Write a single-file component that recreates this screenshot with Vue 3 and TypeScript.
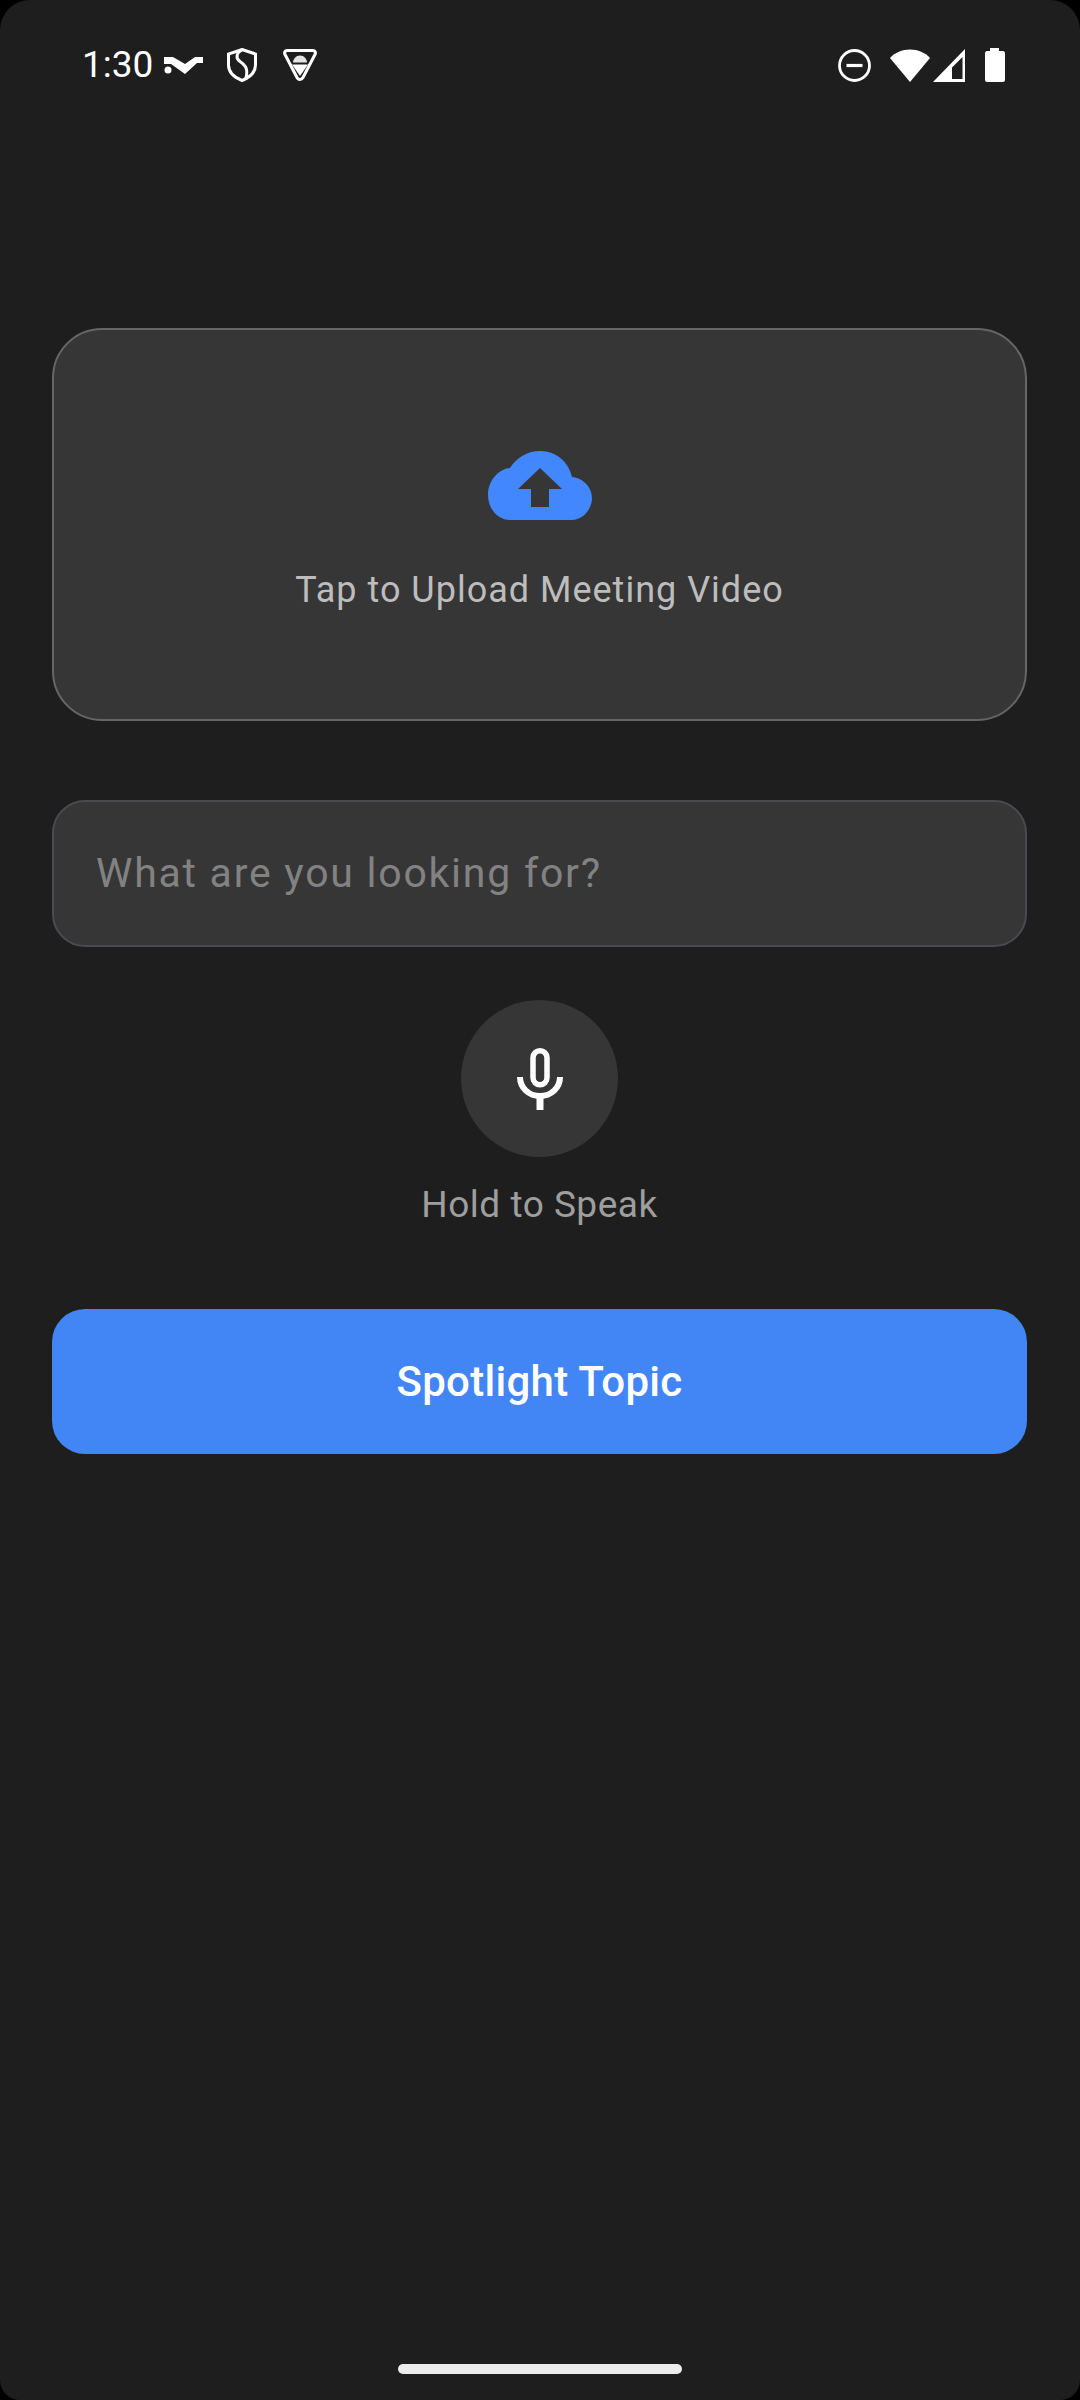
<script setup lang="ts">
const title = 'Spotlight Topic'
</script>

<template>
  <div class="screen">
    <header class="status">
      <div class="status-left">
        <span class="clock">1:30</span>
        <svg width="39" height="17" viewBox="0 0 39 17">
          <circle cx="4" cy="13" r="3.500" fill="#fff" />
          <path d="M0 0h9l12 7L31 0h8v6h-6L21 17 7 7H0z" fill="#fff" />
        </svg>
        <svg class="ic-shield" width="30" height="34" viewBox="0 0 30 34" fill="none" stroke="#fff" stroke-width="3">
          <path d="M15 1.500 28.500 6v11c0 7.500-6 12.500-13.500 15.500C7.500 29.500 1.500 24.500 1.500 17V6z" />
          <path d="M15 2c-6 3-6.500 8.500-2 11.500s8.500 6 6 17" />
        </svg>
        <svg class="ic-android" width="34" height="32" viewBox="0 0 34 32">
          <path d="M4 1.500h26c2 0 3 2 2 4L20 28.500c-1.500 2.500-5 2.500-6 0L2 5.500c-1-2 0-4 2-4z" fill="none" stroke="#fff" stroke-width="3" />
          <path d="M10 13.500c0-3.500 3-7 7-7s7 3.500 7 7z" fill="#e4e4e4" />
          <path d="M9 15.500h16L17 27z" fill="#fff" />
        </svg>
      </div>
      <div class="status-right">
        <svg width="33" height="33" viewBox="0 0 33 33" fill="none" stroke="#fff">
          <circle cx="16.500" cy="16.500" r="15" stroke-width="2.800" />
          <path d="M8.500 16.500h16" stroke-width="3.200" />
        </svg>
        <svg class="ic-wifi" width="40" height="33" viewBox="0 0 40 33">
          <path d="M0 9C5 3.500 12 .5 20 .5S35 3.500 40 9L20 33z" fill="#fff" />
        </svg>
        <svg class="ic-signal" width="33" height="33" viewBox="0 0 33 33">
          <path fill-rule="evenodd" d="M32 0v33H0zM29.500 8 19 18.500V30h10.500z" fill="#fff" />
        </svg>
        <svg class="ic-battery" width="20" height="34" viewBox="0 0 20 34">
          <path d="M5 0h9v3h4c1 0 2 1 2 2v27c0 1-1 2-2 2H2c-1 0-2-1-2-2V5c0-1 1-2 2-2h3z" fill="#fff" />
        </svg>
      </div>
    </header>

    <main class="content">
      <section class="upload">
        <svg width="104" height="69" viewBox="0 0 104 69">
          <path d="M22 69C10 69 0 58 0 44c0-14 10-26 22-27C29 6 40 0 52 0c17 0 29 12 32 26 11 1 20 10 20 21 0 12-10 22-20 22z" fill="#4287fe" />
          <path d="M52 17 74 38H61v18H43V38H30z" fill="#363636" />
        </svg>
        <span class="upload-label">Tap to Upload Meeting Video</span>
      </section>

      <div class="query">What are you looking for?</div>

      <div class="voice">
        <div class="mic">
          <svg width="46" height="62" viewBox="0 0 46 62">
            <rect x="16" y="2.750" width="14" height="34" rx="7" fill="none" stroke="#fff" stroke-width="5.500" />
            <path d="M3 29c0 11 9 19 20 19s20-8 20-19" fill="none" stroke="#fff" stroke-width="6" />
            <path d="M23 47v15" stroke="#fff" stroke-width="7" />
          </svg>
        </div>
        <span class="voice-label">Hold to Speak</span>
      </div>

      <button type="button" class="spot">{{ title }}</button>
    </main>

    <div class="home"></div>
  </div>
</template>

<style>
html,
body {
  margin: 0;
  background: #000;
}
</style>

<style scoped>
.screen {
  position: relative;
  width: 1080px;
  height: 2400px;
  background: #1e1e1e;
  border-radius: 30px 30px 20px 20px;
  display: flex;
  flex-direction: column;
  font-family: Roboto, sans-serif;
  overflow: hidden;
}

.status {
  height: 126px;
  padding: 48px 75px 0 82px;
  box-sizing: border-box;
  display: flex;
  justify-content: space-between;
  align-items: flex-start;
  flex-shrink: 0;
}

.status-left {
  display: flex;
  align-items: center;
  height: 34px;
}

.clock {
  color: #fff;
  font-size: 37px;
  line-height: 34px;
  margin-right: 11px;
}

.ic-shield {
  margin-left: 24px;
}

.ic-android {
  margin-left: 26px;
}

.status-right {
  display: flex;
  align-items: center;
  height: 34px;
}

.ic-wifi {
  margin-left: 19px;
}

.ic-signal {
  margin-left: 3px;
}

.ic-battery {
  margin-left: 19px;
}

.content {
  padding: 202px 53px 0 52px;
  display: flex;
  flex-direction: column;
}

.upload {
  height: 393px;
  box-sizing: border-box;
  background: #363636;
  border: 2px solid #666;
  border-radius: 50px;
  display: flex;
  flex-direction: column;
  align-items: center;
  padding-top: 121px;
}

.upload-label {
  margin-top: 48px;
  color: #bdbdbd;
  font-size: 36px;
  line-height: 44px;
  letter-spacing: 1px;
}

.query {
  margin-top: 79px;
  height: 147px;
  box-sizing: border-box;
  background: #363636;
  border: 2px solid #4a4a52;
  border-radius: 33px;
  padding: 0 0 2px 42px;
  display: flex;
  align-items: center;
  color: #828282;
  font-size: 41px;
  letter-spacing: 1.750px;
}

.voice {
  margin-top: 53px;
  display: flex;
  flex-direction: column;
  align-items: center;
}

.mic {
  width: 157px;
  height: 157px;
  border-radius: 50%;
  background: #363636;
  display: flex;
  align-items: center;
  justify-content: center;
}

.voice-label {
  margin-top: 27px;
  color: #9e9e9e;
  font-size: 37px;
  line-height: 42px;
  letter-spacing: 0.5px;
}

.spot {
  margin-top: 83px;
  height: 145px;
  border: none;
  border-radius: 33px;
  background: #4285f4;
  color: #fff;
  font-family: inherit;
  font-weight: 500;
  font-size: 42px;
  letter-spacing: 0.3px;
}

.home {
  position: absolute;
  left: 398px;
  top: 2364px;
  width: 284px;
  height: 10px;
  border-radius: 5px;
  background: #ececec;
}
</style>
